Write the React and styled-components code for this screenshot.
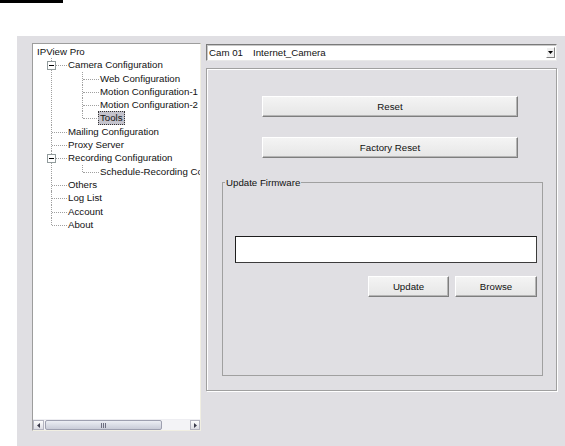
import React from 'react'
import styled, { createGlobalStyle, css } from 'styled-components'

const GlobalStyle = createGlobalStyle`
  body {
    margin: 0;
    background: #ffffff;
    font-family: 'Liberation Sans', Arial, sans-serif;
    font-size: 9.7px;
    color: #111;
  }
`

const TopMark = styled.div`
  width: 63px;
  height: 3px;
  background: #000;
`

const Window = styled.div`
  margin: 33px 0 0 17px;
  height: 410px;
  box-sizing: border-box;
  background: #e0dfe3;
  display: flex;
  gap: 5px;
  padding: 7px 8px 0 15px;
`

const TreeBox = styled.div`
  width: 169px;
  height: 388px;
  box-sizing: border-box;
  background: #fff;
  border-top: 1px solid #9d9d9d;
  border-left: 1px solid #9d9d9d;
  border-right: 1px solid #f1efe2;
  border-bottom: 1px solid #f1efe2;
  display: flex;
  flex-direction: column;
  overflow: hidden;
`

const TreeScroll = styled.div`
  flex: 1;
  padding: 1px 0 0 4px;
  overflow: hidden;
  white-space: nowrap;
`

const Row = styled.div`
  height: 13.3px;
  line-height: 13.3px;
`

const Label = styled.span`
  display: inline-block;
  height: 12px;
  line-height: 12px;
  padding: 0 1px;
  border: 1px solid transparent;
  margin-left: -2px;
  ${p => p.$selected && css`
    background: #c4c3cc;
    border: 1px dotted #333;
  `}
`

const Branch = styled.ul`
  list-style: none;
  margin: 0 0 0 ${p => p.$indent}px;
  padding: 0;
`

const Item = styled.li`
  position: relative;
  padding-left: ${p => p.$pad}px;

  &::before {
    content: '';
    position: absolute;
    left: 0;
    top: 0;
    height: ${p => (p.$last ? '7px' : '100%')};
    border-left: 1px dotted #a0a0a0;
  }

  &::after {
    content: '';
    position: absolute;
    left: 1px;
    top: 7px;
    width: ${p => p.$pad - 2}px;
    border-top: 1px dotted #a0a0a0;
  }
`

const Expander = styled.span`
  position: absolute;
  z-index: 1;
  left: -4px;
  top: 3px;
  width: 7px;
  height: 7px;
  background: #fff;
  border: 1px solid #919b9c;
  display: flex;
  align-items: center;
  justify-content: center;

  &::before {
    content: '';
    width: 5px;
    height: 1px;
    background: #000;
  }
`

const HScroll = styled.div`
  height: 10px;
  display: flex;
  align-items: stretch;
  background: #f3f3f6;
  border-top: 1px solid #eeeef2;
`

const ArrowBtn = styled.div`
  width: ${p => p.$w}px;
  box-sizing: border-box;
  background: linear-gradient(#fdfdfd, #dcdce4);
  border: 1px solid #b4b4c0;
  display: flex;
  align-items: center;
  justify-content: center;
  margin-left: ${p => (p.$right ? 'auto' : '0')};
`

const Thumb = styled.div`
  width: 117px;
  margin-left: 1px;
  box-sizing: border-box;
  background: linear-gradient(#eceef4, #c9ccd8);
  border: 1px solid #9ea0b0;
  border-radius: 2px;
  display: flex;
  align-items: center;
  justify-content: center;
  gap: 1px;
`

const Grip = styled.span`
  width: 1px;
  height: 5px;
  background: #6e6e80;
`

const RightCol = styled.div`
  width: 351px;
  display: flex;
  flex-direction: column;
  gap: 7px;
`

const Combo = styled.div`
  margin-top: 1px;
  height: 17px;
  box-sizing: border-box;
  background: #fff;
  border-top: 1px solid #7a7a7a;
  border-left: 1px solid #7a7a7a;
  border-right: 1px solid #e8e8e8;
  border-bottom: 1px solid #e8e8e8;
  box-shadow: inset 1px 1px 0 #c8c8c8;
  display: flex;
  align-items: center;
  padding: 0 1px 0 2px;
`

const ComboCell = styled.span`
  width: ${p => (p.$w ? `${p.$w}px` : 'auto')};
  flex: ${p => (p.$w ? 'none' : '1')};
`

const DropBtn = styled.div`
  width: 9px;
  height: 11px;
  box-sizing: border-box;
  background: #f0f0f0;
  border: 1px solid;
  border-color: #fff #808080 #808080 #fff;
  display: flex;
  align-items: center;
  justify-content: center;
`

const Panel = styled.div`
  height: 323px;
  box-sizing: border-box;
  border: 1px solid #a0a0a0;
  box-shadow: 1px 1px 0 #fff, inset 1px 1px 0 #fff;
  display: flex;
  flex-direction: column;
  padding: 27px 13px 14px 14px;
`

const Button = styled.button`
  width: ${p => p.$w}px;
  height: 21px;
  margin-left: ${p => p.$left || 0}px;
  margin-bottom: ${p => p.$bottom || 0}px;
  box-sizing: border-box;
  font-family: inherit;
  font-size: 9.7px;
  color: #111;
  padding: 0;
  background: linear-gradient(#f4f4f4, #e6e6e6);
  border: 1px solid;
  border-color: #ffffff #7e7e7e #7e7e7e #ffffff;
  box-shadow: inset -1px -1px 0 #b5b5b5;
`

const Group = styled.fieldset`
  flex: 1;
  margin: 18px 0 0 1px;
  padding: 47px 5px 0 12px;
  border: 1px solid #a0a0a0;
  min-width: 0;
  display: flex;
  flex-direction: column;
`

const Legend = styled.legend`
  padding: 0 1px;
  margin-left: -10px;
  line-height: 13px;
`

const FileField = styled.div`
  height: 27px;
  box-sizing: border-box;
  background: #fff;
  border: 1px solid #1e1e1e;
  border-right-color: #3c3c3c;
  border-bottom-color: #3c3c3c;
`

const ButtonRow = styled.div`
  display: flex;
  justify-content: flex-end;
  gap: 6px;
  margin-top: 13px;
`

const tree = [
  {
    label: 'Camera Configuration',
    children: ['Web Configuration', 'Motion Configuration-1', 'Motion Configuration-2', 'Tools'],
  },
  { label: 'Mailing Configuration' },
  { label: 'Proxy Server' },
  { label: 'Recording Configuration', children: ['Schedule-Recording Configuration'] },
  { label: 'Others' },
  { label: 'Log List' },
  { label: 'Account' },
  { label: 'About' },
]

function Arrow({ dir }) {
  const pts = dir === 'left' ? '4,1 1,3.5 4,6' : '1,1 4,3.5 1,6'
  return (
    <svg width="5" height="7" viewBox="0 0 5 7">
      <polygon points={pts} fill="#3a3a4a" />
    </svg>
  )
}

export default function App() {
  return (
    <>
      <GlobalStyle />
      <TopMark />
      <Window>
        <TreeBox>
          <TreeScroll>
            <Row><Label>IPView Pro</Label></Row>
            <Branch $indent={14}>
              {tree.map((node, i) => (
                <Item key={node.label} $pad={17} $last={i === tree.length - 1}>
                  {node.children && <Expander />}
                  <Row><Label>{node.label}</Label></Row>
                  {node.children && (
                    <Branch $indent={14}>
                      {node.children.map((c, j) => (
                        <Item key={c} $pad={18} $last={j === node.children.length - 1}>
                          <Row><Label $selected={c === 'Tools'}>{c}</Label></Row>
                        </Item>
                      ))}
                    </Branch>
                  )}
                </Item>
              ))}
            </Branch>
          </TreeScroll>
          <HScroll>
            <ArrowBtn $w={11}><Arrow dir="left" /></ArrowBtn>
            <Thumb><Grip /><Grip /><Grip /></Thumb>
            <ArrowBtn $w={10} $right><Arrow dir="right" /></ArrowBtn>
          </HScroll>
        </TreeBox>

        <RightCol>
          <Combo>
            <ComboCell $w={44}>Cam 01</ComboCell>
            <ComboCell>Internet_Camera</ComboCell>
            <DropBtn>
              <svg width="5" height="3" viewBox="0 0 5 3">
                <polygon points="0,0 5,0 2.5,3" fill="#000" />
              </svg>
            </DropBtn>
          </Combo>
          <Panel>
            <Button $w={256} $left={41} $bottom={20}>Reset</Button>
            <Button $w={256} $left={41}>Factory Reset</Button>
            <Group>
              <Legend>Update Firmware</Legend>
              <FileField />
              <ButtonRow>
                <Button $w={81}>Update</Button>
                <Button $w={82}>Browse</Button>
              </ButtonRow>
            </Group>
          </Panel>
        </RightCol>
      </Window>
    </>
  )
}
